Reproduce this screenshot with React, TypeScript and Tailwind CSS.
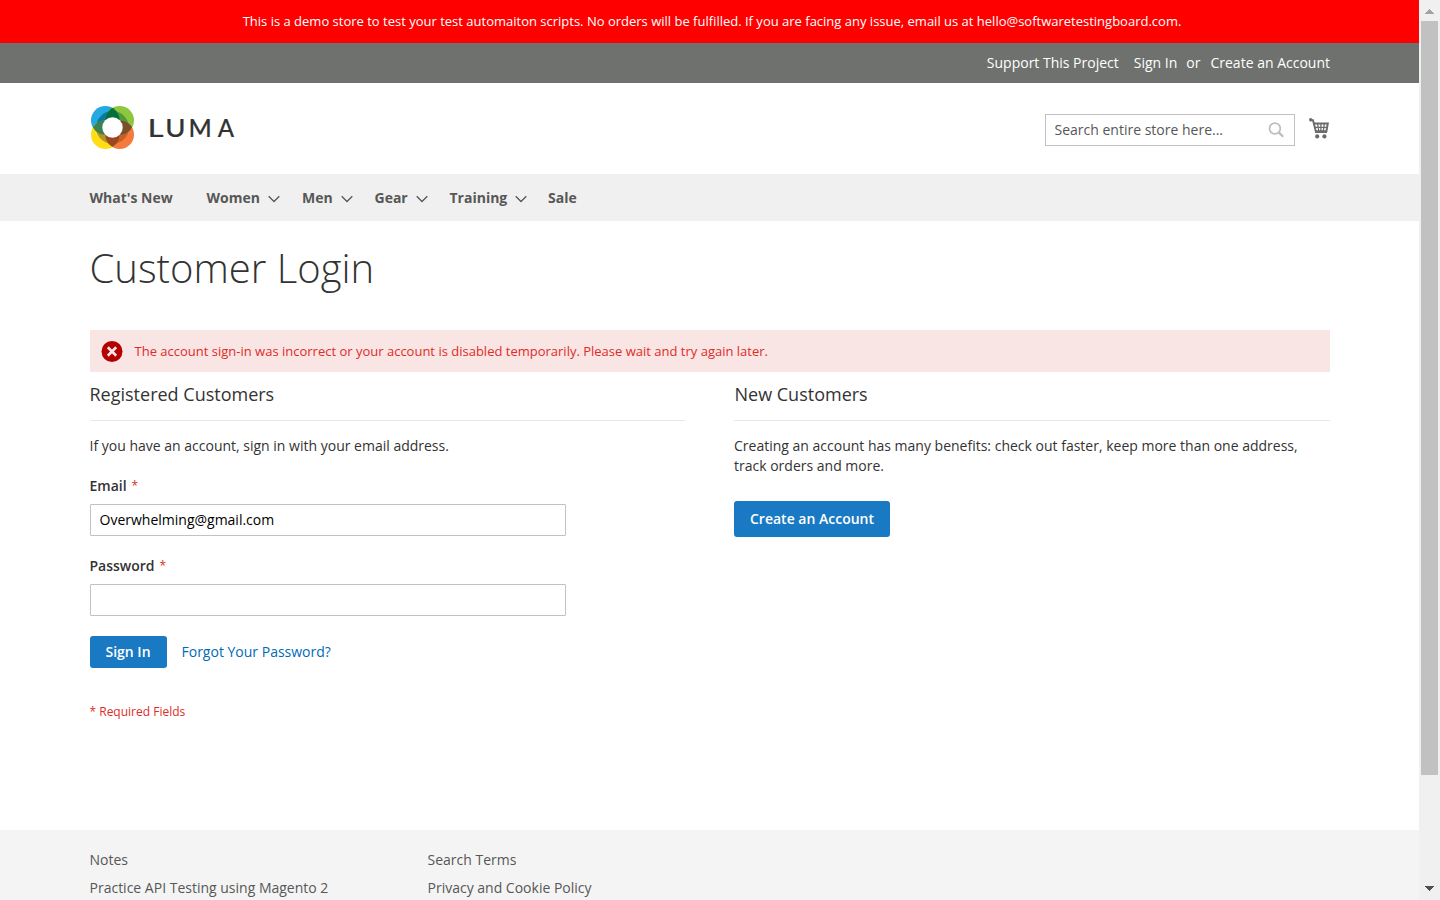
import type { ReactNode } from 'react';

function Chevron() {
  return (
    <svg width="12" height="8" viewBox="0 0 12 8" fill="none" stroke="#575757" strokeWidth="1.3" className="mt-0.5">
      <path d="M0.7 1.2 6 6.5 11.3 1.2" />
    </svg>
  );
}

const wordmark = [
  { letter: 'L', x: 147.8, scale: 1.2 },
  { letter: 'U', x: 165.2, scale: 1.08 },
  { letter: 'M', x: 188.6, scale: 0.98 },
  { letter: 'A', x: 217.8, scale: 0.94 },
];

function Logo() {
  return (
    <svg width="148" height="46" viewBox="90 105 148 46" className="block">
      <circle cx="105.3" cy="120.3" r="14.3" fill="#26a8e0" />
      <circle cx="119.7" cy="120.3" r="14.3" fill="#8dc63f" />
      <circle cx="119.7" cy="134.7" r="14.3" fill="#f47b3c" />
      <circle cx="105.3" cy="134.7" r="14.3" fill="#ffde17" />
      <defs>
        <clipPath id="tl"><circle cx="105.3" cy="120.3" r="14.3" /></clipPath>
        <clipPath id="tr"><circle cx="119.7" cy="120.3" r="14.3" /></clipPath>
        <clipPath id="br"><circle cx="119.7" cy="134.7" r="14.3" /></clipPath>
        <clipPath id="bl"><circle cx="105.3" cy="134.7" r="14.3" /></clipPath>
      </defs>
      <circle cx="112.5" cy="127.5" r="16.4" fill="#08799f" clipPath="url(#tl)" />
      <circle cx="112.5" cy="127.5" r="16.4" fill="#4f9a3c" clipPath="url(#tr)" />
      <circle cx="112.5" cy="127.5" r="16.4" fill="#c95f27" clipPath="url(#br)" />
      <circle cx="112.5" cy="127.5" r="16.4" fill="#b0962a" clipPath="url(#bl)" />
      <g clipPath="url(#tl)">
        <circle cx="119.7" cy="120.3" r="14.3" fill="#05703c" />
        <circle cx="105.3" cy="134.7" r="14.3" fill="#3b8250" />
      </g>
      <g clipPath="url(#br)">
        <circle cx="119.7" cy="120.3" r="14.3" fill="#79502a" />
        <circle cx="105.3" cy="134.7" r="14.3" fill="#9b4820" />
      </g>
      <circle cx="112.5" cy="127.5" r="10.2" fill="#fff" />
      {wordmark.map((glyph) => (
        <text key={glyph.letter} transform={`translate(${glyph.x} 136.5) scale(${glyph.scale} 1)`} fontSize="25.5" fontWeight="500" fill="#333" stroke="#333" strokeWidth="0.2" fontFamily="Lato, sans-serif">
          {glyph.letter}
        </text>
      ))}
    </svg>
  );
}

function Cart() {
  return (
    <svg width="20" height="21" viewBox="0 0 20 21" fill="none" stroke="#6b6b6b">
      <circle cx="1.7" cy="1.8" r="1.7" fill="#6b6b6b" stroke="none" />
      <path d="M1.8 2.2H4L7 14H18" strokeWidth="1.9" />
      <path d="M4.2 5.4H18.8L17.4 13.2H6.5" strokeWidth="2" />
      <path d="M5.5 9.3H18M8.6 5.5 9.8 13M11.9 5.5V13M15.4 5.5 14.3 13" strokeWidth="1.3" />
      <circle cx="8.2" cy="18.4" r="2.1" fill="#6b6b6b" stroke="none" />
      <circle cx="15.4" cy="18.4" r="2.1" fill="#6b6b6b" stroke="none" />
    </svg>
  );
}

function BlockTitle({ children }: { children: ReactNode }) {
  return <h2 className="h-[41px] border-b border-[#e8e8e8] pt-1 text-[18px] leading-5">{children}</h2>;
}

function Label({ children }: { children: ReactNode }) {
  return (
    <label className="flex h-5 items-center gap-[5px] font-semibold leading-5">
      {children}
      <span className="text-[12px] font-normal text-[#e02b27]">*</span>
    </label>
  );
}

const nav = [
  { name: "What's New", width: 'w-[117px]', menu: false },
  { name: 'Women', width: 'w-[95.5px]', menu: true },
  { name: 'Men', width: 'w-[72.5px]', menu: true },
  { name: 'Gear', width: 'w-[75px]', menu: true },
  { name: 'Training', width: 'w-[98.5px]', menu: true },
  { name: 'Sale', width: 'w-[40px]', menu: false },
];

export default function App() {
  return (
    <div className="flex h-[900px] w-[1440px] overflow-hidden bg-white font-['Open_Sans',sans-serif] text-[14px] text-[#333]">
      <div className="flex w-[1419px] shrink-0 flex-col">
        <div className="flex h-[43px] items-center justify-center bg-[#f00] pr-[14px] pl-[19px] text-[13px] text-white">
          <p className="whitespace-nowrap">
            This is a demo store to test your test automaiton scripts. No orders will be fulfilled. If you are facing any issue, email us at hello@softwaretestingboard.com.
          </p>
        </div>
        <div className="flex h-10 items-center justify-end bg-[#6e716e] pr-[89px] pb-0.5 text-white">
          <span>Support This Project</span>
          <span className="ml-[15px]">Sign In</span>
          <span className="ml-[9px]">or</span>
          <span className="ml-[10px]">Create an Account</span>
        </div>
        <header className="flex h-[91px] items-start justify-between pt-[22px] pr-[90px] pl-[90px]">
          <Logo />
          <div className="flex items-start pt-[9px]">
            <div className="flex h-8 w-[250px] items-center justify-between border border-[#c2c2c2] pr-[10px] pl-[8.5px] text-[#575757]">
              <span className="pb-0.5">Search entire store here...</span>
              <svg width="16" height="16" viewBox="0 0 16 16" fill="none" stroke="#bdbdbd">
                <circle cx="6.9" cy="6.5" r="5.4" strokeWidth="1.7" />
                <path d="m10.8 10.4 4.4 4.3" strokeWidth="2.2" />
              </svg>
            </div>
            <div className="mt-1 ml-[14px] w-5"><Cart /></div>
          </div>
        </header>
        <nav className="flex h-[47px] items-center bg-[#f0f0f0] pl-[89.5px] font-bold text-[#575757]">
          {nav.map((item) => (
            <div key={item.name} className={`flex items-center gap-2 whitespace-nowrap ${item.width}`}>
              <span>{item.name}</span>
              {item.menu && <Chevron />}
            </div>
          ))}
        </nav>
        <main className="flex h-[609px] flex-col pr-[89px] pl-[90px]">
          <h1 className="-ml-[0.5px] h-[109px] pt-[25px] text-[40px] leading-[44px] font-light">Customer Login</h1>
          <div className="flex h-[42px] items-center bg-[#fae5e5] pl-[11px] text-[13px] text-[#e02b27]">
            <svg width="22" height="22" viewBox="0 0 22 22">
              <circle cx="11" cy="11.5" r="10.5" fill="#b30000" />
              <path d="M6.8 7.3 15.2 15.7M15.2 7.3 6.8 15.7" stroke="#fae5e5" strokeWidth="2.7" />
            </svg>
            <span className="ml-[11.5px] pt-[1.5px]">The account sign-in was incorrect or your account is disabled temporarily. Please wait and try again later.</span>
          </div>
          <div className="flex justify-between pt-2">
            <section className="flex w-[595px] flex-col">
              <BlockTitle><span className="-ml-[0.5px]">Registered Customers</span></BlockTitle>
              <p className="mt-[15px] -ml-[0.5px] leading-5">If you have an account, sign in with your email address.</p>
              <div className="mt-5 -ml-[0.5px]"><Label>Email</Label></div>
              <div className="mt-2 flex h-8 w-[476px] items-center rounded-[1px] border border-[#c2c2c2] pb-0.5 pl-[8.5px] text-black">Overwhelming@gmail.com</div>
              <div className="mt-5 -ml-[0.5px]"><Label>Password</Label></div>
              <div className="mt-2 h-8 w-[476px] rounded-[1px] border border-[#c2c2c2]" />
              <div className="mt-5 flex h-8 items-center">
                <button className="h-8 w-[77px] rounded-[3px] bg-[#1979c3] pr-px pb-0.5 font-semibold text-white">Sign In</button>
                <a className="ml-[14.5px] pb-0.5 text-[#006bb4]">Forgot Your Password?</a>
              </div>
              <p className="mt-[34px] -ml-[0.5px] text-[12px] leading-5 text-[#e02b27]">* Required Fields</p>
            </section>
            <section className="w-[596px]">
              <BlockTitle><span className="ml-[0.5px]">New Customers</span></BlockTitle>
              <p className="mt-[15px] leading-5">
                Creating an account has many benefits: check out faster, keep more than one address,
                <br />
                track orders and more.
              </p>
              <button className="mt-[25px] h-9 w-[156px] rounded-[3px] bg-[#1979c3] pb-0.5 font-semibold text-white">Create an Account</button>
            </section>
          </div>
        </main>
        <footer className="flex h-[70px] bg-[#f4f4f4] pt-5 pl-[89.5px] leading-5 text-[#575757]">
          <div className="flex w-[338px] flex-col gap-2">
            <span>Notes</span>
            <span>Practice API Testing using Magento 2</span>
          </div>
          <div className="flex flex-col gap-2">
            <span>Search Terms</span>
            <span>Privacy and Cookie Policy</span>
          </div>
        </footer>
      </div>
      <div className="flex w-[21px] flex-col items-center bg-[#f0f0f0] pr-px">
        <svg width="9" height="5" viewBox="0 0 9 5" className="mt-[9px] block shrink-0" shapeRendering="crispEdges"><path d="M0 5 4.5 0 9 5Z" fill="#a3a3a3" /></svg>
        <div className="mt-[7px] ml-px h-[754px] w-[17px] bg-[#c1c1c1]" />
        <svg width="9" height="5" viewBox="0 0 9 5" className="mt-[111px] block shrink-0" shapeRendering="crispEdges"><path d="M0 0 4.5 5 9 0Z" fill="#505050" /></svg>
      </div>
    </div>
  );
}
